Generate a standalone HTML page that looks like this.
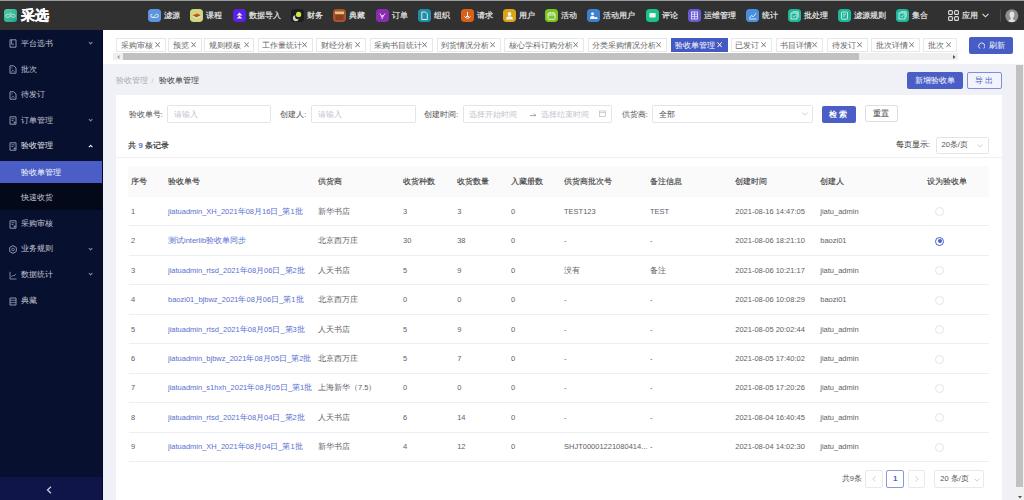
<!DOCTYPE html><html><head><meta charset="utf-8"><style>
*{box-sizing:border-box;margin:0;padding:0}
html,body{width:1024px;height:500px;overflow:hidden;background:#eff1f6;font-family:"Liberation Sans",sans-serif;position:relative}
.a{position:absolute}
.hi{position:absolute;top:9px;width:13px;height:13px;border-radius:3px;overflow:hidden}
.ht{position:absolute;top:10.8px;font-size:7.6px;line-height:10px;color:#dadada;font-weight:bold;white-space:nowrap}
.si{position:absolute;left:0;width:103px;color:#c3c7d3;font-size:7.5px}
.si .t{position:absolute;left:21px;line-height:10px;white-space:nowrap}
.chev{position:absolute;width:3.3px;height:3.3px;border-right:.8px solid #868ca0;border-bottom:.8px solid #868ca0;transform:rotate(45deg)}
.tab{position:absolute;top:37.5px;height:14px;border:1px solid #e6e8ef;background:#fff;color:#666;font-size:7.5px;line-height:12px;white-space:nowrap}
.tab span{position:absolute;top:1px}
.tab.on{background:#4459c2;border-color:#4459c2;color:#fff}
.btn{position:absolute;border-radius:2px;font-size:7.5px;text-align:center;white-space:nowrap}
.lbl{position:absolute;font-size:7.5px;color:#505256;line-height:10px;white-space:nowrap}
.inp{position:absolute;border:1px solid #e3e4e8;border-radius:1.5px;background:#fff;height:17.5px;top:105px}
.ph{position:absolute;font-size:7.5px;color:#c0c4cc;line-height:10px;white-space:nowrap}
.th{position:absolute;font-size:7.5px;color:#383838;-webkit-text-stroke:.12px #383838;line-height:10px;white-space:nowrap;top:176.5px}
.td{position:absolute;font-size:7.5px;color:#606266;line-height:10px;white-space:nowrap}
.lk{color:#5a6fd0}
.hl{position:absolute;left:128.5px;width:860.5px;height:1px;background:#eeeff2}
.radio{position:absolute;width:9px;height:9px;border:1px solid #e2e4ea;border-radius:50%;background:#fff}
</style></head><body>
<div class="a" style="left:0;top:0;width:1024px;height:1px;background:#9a9a9a"></div>
<div class="a" style="left:0;top:1px;width:1024px;height:29px;background:#313131"></div>
<svg class="a" style="left:4px;top:8.8px" width="13" height="13" viewBox="0 0 13 13"><defs><linearGradient id="lg" x1="0" y1="0" x2="1" y2="1"><stop offset="0" stop-color="#4fcaa9"/><stop offset="1" stop-color="#22a687"/></linearGradient></defs><rect width="13" height="13" rx="3" fill="url(#lg)"/><path d="M2 6.8 C2 4.8 4.5 4.6 6.5 6.8 C8.5 9 11 8.8 11 6.8 C11 4.8 8.5 4.6 6.5 6.8 C4.5 9 2 8.8 2 6.8Z" fill="none" stroke="#d2f0e6" stroke-width=".9"/><circle cx="6.5" cy="4.4" r=".8" fill="#bfe9db"/></svg>
<div class="a" style="left:20.8px;top:7.8px;font-size:13.7px;font-weight:bold;color:#fff;line-height:15px;-webkit-text-stroke:.35px #fff">采选</div>
<svg class="hi" style="left:148px" width="13" height="13" viewBox="0 0 13 13"><rect width="13" height="13" rx="3" fill="#5b95df"/><path d="M4.3 5.2a1.6 1.6 0 1 0 0 3.2h4.4a1.6 1.6 0 1 0 0-3.2c-.8 0-1.3.6-2.2 1.6S5.1 8.4 4.3 8.4" fill="none" stroke="#f2f2f2" stroke-width=".9"/></svg>
<div class="ht" style="left:164px">滤源</div>
<svg class="hi" style="left:190px" width="13" height="13" viewBox="0 0 13 13"><rect width="13" height="13" rx="3" fill="#cfd77c"/><path d="M2.5 6.5 L7 4.5 L11 6.3 L6.5 8.6Z" fill="#c8501a"/><path d="M2.5 6.5 L2.5 7.8 L6.5 9.8 L11 7.5 L11 6.3 L6.5 8.6Z" fill="#e9e2d6"/></svg>
<div class="ht" style="left:206px">课程</div>
<svg class="hi" style="left:232.5px" width="13" height="13" viewBox="0 0 13 13"><rect width="13" height="13" rx="3" fill="#5a1fe4"/><path d="M3.5 6.5 L6.5 3.5 L9.5 6.5Z M3.5 9.5 L6.5 6.8 L9.5 9.5Z" fill="#f2f2f2"/></svg>
<div class="ht" style="left:248.5px">数据导入</div>
<svg class="hi" style="left:291px" width="13" height="13" viewBox="0 0 13 13"><rect width="13" height="13" rx="3" fill="#1c1d21"/><circle cx="7.6" cy="5.4" r="2.6" fill="#d6e23a"/><path d="M4.5 6.3a3 3 0 1 0 3.3 3.4 2.4 2.4 0 0 1-3.3-3.4Z" fill="#cfcfcf"/></svg>
<div class="ht" style="left:307px">财务</div>
<svg class="hi" style="left:333px" width="13" height="13" viewBox="0 0 13 13"><rect width="13" height="13" rx="3" fill="#a6532f"/><rect x="2" y="2.5" width="9" height="2.6" fill="#e8c27a"/><rect x="2.5" y="6" width="8" height="5" fill="#8a3f22"/></svg>
<div class="ht" style="left:349px">典藏</div>
<svg class="hi" style="left:375.5px" width="13" height="13" viewBox="0 0 13 13"><rect width="13" height="13" rx="3" fill="#8a2bb0"/><path d="M4 4.5 L6.2 8.5 L6.2 10 M9 4.5 L6.2 8.5 M5.2 6.8 H8" fill="none" stroke="#f2f2f2" stroke-width=".9"/></svg>
<div class="ht" style="left:391.5px">订单</div>
<svg class="hi" style="left:418.3px" width="13" height="13" viewBox="0 0 13 13"><rect width="13" height="13" rx="3" fill="#1f8fa8"/><path d="M3.8 3 H7.5 L9.3 4.8 V10.5 H3.8Z" fill="none" stroke="#f2f2f2" stroke-width=".9"/></svg>
<div class="ht" style="left:434.3px">组织</div>
<svg class="hi" style="left:460.5px" width="13" height="13" viewBox="0 0 13 13"><rect width="13" height="13" rx="3" fill="#d8601a"/><path d="M3.5 7.5 Q6.5 11 9.5 7.5 M6.5 3 V7.2 M5 7.5 H8" fill="none" stroke="#f2f2f2" stroke-width="1"/></svg>
<div class="ht" style="left:476.5px">请求</div>
<svg class="hi" style="left:502.7px" width="13" height="13" viewBox="0 0 13 13"><rect width="13" height="13" rx="3" fill="#d9a514"/><circle cx="6.5" cy="5" r="1.9" fill="#f2f2f2"/><path d="M3 10.5 Q3 7.3 6.5 7.3 Q10 7.3 10 10.5Z" fill="#f2f2f2"/></svg>
<div class="ht" style="left:518.7px">用户</div>
<svg class="hi" style="left:544.7px" width="13" height="13" viewBox="0 0 13 13"><rect width="13" height="13" rx="3" fill="#7cc520"/><rect x="3" y="4" width="7" height="6.3" rx=".6" fill="none" stroke="#f2f2f2" stroke-width=".9"/><path d="M3 6 H10 M5 3 V4.8 M8 3 V4.8" stroke="#f2f2f2" stroke-width=".9"/></svg>
<div class="ht" style="left:560.7px">活动</div>
<svg class="hi" style="left:587.2px" width="13" height="13" viewBox="0 0 13 13"><rect width="13" height="13" rx="3" fill="#3d7fd0"/><circle cx="5.5" cy="4.8" r="1.5" fill="#f2f2f2"/><path d="M3 10 Q3 6.8 5.5 6.8 Q8 6.8 8 10Z M7.5 10 Q8 7.8 9.3 7.8 Q10.6 7.8 10.6 10Z" fill="#f2f2f2"/></svg>
<div class="ht" style="left:603.2px">活动用户</div>
<svg class="hi" style="left:646px" width="13" height="13" viewBox="0 0 13 13"><rect width="13" height="13" rx="3" fill="#18c28a"/><rect x="3.3" y="4" width="6.4" height="4.6" rx=".8" fill="#f2f2f2"/></svg>
<div class="ht" style="left:662px">评论</div>
<svg class="hi" style="left:687.7px" width="13" height="13" viewBox="0 0 13 13"><rect width="13" height="13" rx="3" fill="#6a5ad8"/><rect x="3.5" y="3" width="6" height="7" fill="none" stroke="#f2f2f2" stroke-width=".8"/><path d="M3.5 5.3 H9.5 M3.5 7.6 H9.5 M6.5 3 V10" stroke="#f2f2f2" stroke-width=".7"/></svg>
<div class="ht" style="left:703.7px">运维管理</div>
<svg class="hi" style="left:745.6px" width="13" height="13" viewBox="0 0 13 13"><rect width="13" height="13" rx="3" fill="#4a8ee0"/><path d="M3 10 H10.5 M3.5 9 L5.5 6.5 L7.3 7.8 L10 4.2" fill="none" stroke="#f2f2f2" stroke-width=".9"/></svg>
<div class="ht" style="left:761.6px">统计</div>
<svg class="hi" style="left:787.8px" width="13" height="13" viewBox="0 0 13 13"><rect width="13" height="13" rx="3" fill="#1db89a"/><rect x="3" y="4" width="6" height="6" fill="none" stroke="#f2f2f2" stroke-width=".8"/><path d="M4.5 2.8 H10.2 V8.5" fill="none" stroke="#f2f2f2" stroke-width=".8"/><path d="M4.6 7 L5.8 8.1 L7.6 6" fill="none" stroke="#f2f2f2" stroke-width=".7"/></svg>
<div class="ht" style="left:803.8px">批处理</div>
<svg class="hi" style="left:838px" width="13" height="13" viewBox="0 0 13 13"><rect width="13" height="13" rx="3" fill="#1db89a"/><rect x="3.5" y="3" width="6" height="7.2" rx=".6" fill="none" stroke="#f2f2f2" stroke-width=".8"/><path d="M5 5.2 H8 M5 7 H7" stroke="#f2f2f2" stroke-width=".7"/></svg>
<div class="ht" style="left:854px">滤源规则</div>
<svg class="hi" style="left:896px" width="13" height="13" viewBox="0 0 13 13"><rect width="13" height="13" rx="3" fill="#1db89a"/><rect x="3" y="4" width="6" height="6" fill="none" stroke="#f2f2f2" stroke-width=".8"/><path d="M4.5 2.8 H10.2 V8.5" fill="none" stroke="#f2f2f2" stroke-width=".8"/><path d="M4.6 7 L5.8 8.1 L7.6 6" fill="none" stroke="#f2f2f2" stroke-width=".7"/></svg>
<div class="ht" style="left:912px">集合</div>
<svg class="a" style="left:947.5px;top:10px" width="11" height="11" viewBox="0 0 11 11"><g fill="none" stroke="#ddd" stroke-width="1.1"><rect x="0.6" y="0.6" width="3.8" height="3.8" rx="1"/><rect x="6.6" y="0.6" width="3.8" height="3.8" rx="1"/><rect x="0.6" y="6.6" width="3.8" height="3.8" rx="1"/><rect x="6.6" y="6.6" width="3.8" height="3.8" rx="1"/></g></svg>
<div class="ht" style="left:962px">应用</div>
<svg class="a" style="left:981.5px;top:13px" width="7" height="5" viewBox="0 0 7 5"><path d="M0.5 0.8 L3.5 3.8 L6.5 0.8" fill="none" stroke="#ddd" stroke-width="1.1"/></svg>
<div class="a" style="left:1000px;top:9px;width:1px;height:13px;background:#4a4a4a"></div>
<svg class="a" style="left:1005.4px;top:9px" width="13.6" height="13.6" viewBox="0 0 13.6 13.6"><circle cx="6.8" cy="6.8" r="6.6" fill="#8e8e8e"/><ellipse cx="6.9" cy="5.6" rx="2.4" ry="3.2" fill="#e2e2e2"/><path d="M5.6 8 L5.8 10.3 Q3.8 10.8 3.2 12.2 Q6.8 13.8 10.4 12.2 Q9.8 10.8 8 10.3 L8.2 8Z" fill="#e2e2e2"/></svg>
<div class="a" style="left:0;top:30px;width:103px;height:470px;background:#081030"></div>
<div class="a" style="left:0;top:160.9px;width:103px;height:21.9px;background:#4a5ec6"></div>
<div class="a" style="left:0;top:182.8px;width:103px;height:27.4px;background:#040919"></div>
<div class="a" style="left:0;top:476.7px;width:103px;height:23.3px;background:#0f1548"></div>
<div class="a" style="left:102px;top:30px;width:1px;height:470px;background:#020822"></div>
<div class="si" style="top:38.5px;color:#c3c7d3"><span class="t" style="top:0">平台选书</span></div>
<svg class="a" style="left:8.5px;top:39.3px" width="8" height="9" viewBox="0 0 8 9"><path d="M1 .8 H7 V8.2 H1Z" fill="none" stroke="#8f95aa" stroke-width="1"/><path d="M2.6 1 V5.2 H5" fill="none" stroke="#8f95aa" stroke-width=".9"/></svg>
<div class="chev" style="left:88.8px;top:40.7px"></div>
<div class="si" style="top:64.6px;color:#c3c7d3"><span class="t" style="top:0">批次</span></div>
<svg class="a" style="left:8.5px;top:65.39999999999999px" width="8" height="9" viewBox="0 0 8 9"><path d="M1 .8 H4.8 L7 3 V8.2 H1Z" fill="none" stroke="#8f95aa" stroke-width="1"/><path d="M2.5 6.8 L4 5.2 L5.5 6.8" fill="none" stroke="#8f95aa" stroke-width=".8"/><circle cx="3" cy="3" r=".6" fill="#8f95aa"/></svg>
<div class="si" style="top:90px;color:#c3c7d3"><span class="t" style="top:0">待发订</span></div>
<svg class="a" style="left:8.5px;top:90.8px" width="8" height="9" viewBox="0 0 8 9"><path d="M1 .8 H4.8 L7 3 V8.2 H1Z" fill="none" stroke="#8f95aa" stroke-width="1"/><path d="M2.5 6.8 L4 5.2 L5.5 6.8" fill="none" stroke="#8f95aa" stroke-width=".8"/><circle cx="3" cy="3" r=".6" fill="#8f95aa"/></svg>
<div class="si" style="top:115.6px;color:#c3c7d3"><span class="t" style="top:0">订单管理</span></div>
<svg class="a" style="left:8.5px;top:116.39999999999999px" width="8" height="9" viewBox="0 0 8 9"><path d="M1 .8 H7 V8.2 H1Z" fill="none" stroke="#8f95aa" stroke-width="1"/><path d="M2.5 2.8 H5.5 M2.5 4.5 H4.5" stroke="#8f95aa" stroke-width=".8"/><circle cx="5.6" cy="6.6" r="1" fill="#8f95aa"/></svg>
<div class="chev" style="left:88.8px;top:117.8px"></div>
<div class="si" style="top:141.25px;color:#e8eaf0"><span class="t" style="top:0">验收管理</span></div>
<svg class="a" style="left:8.5px;top:142.05px" width="8" height="9" viewBox="0 0 8 9"><path d="M1 .8 H7 V8.2 H1Z" fill="none" stroke="#8f95aa" stroke-width="1"/><path d="M2.5 2.8 H5.5 M2.5 4.5 H4.5" stroke="#8f95aa" stroke-width=".8"/><circle cx="5.6" cy="6.6" r="1" fill="#8f95aa"/></svg>
<div class="chev" style="left:88.8px;top:145.25px;transform:rotate(225deg);border-color:#fff"></div>
<div class="si" style="top:167.5px;color:#fff"><span class="t" style="top:0">验收单管理</span></div>
<div class="si" style="top:192.7px;color:#c3c7d3"><span class="t" style="top:0">快速收货</span></div>
<div class="si" style="top:218.75px;color:#c3c7d3"><span class="t" style="top:0">采购审核</span></div>
<svg class="a" style="left:8.5px;top:219.55px" width="8" height="9" viewBox="0 0 8 9"><path d="M1 .8 H7 V8.2 H1Z" fill="none" stroke="#8f95aa" stroke-width="1"/><path d="M2.5 2.8 H5.5 M2.5 4.5 H4.5" stroke="#8f95aa" stroke-width=".8"/><circle cx="5.6" cy="6.6" r="1" fill="#8f95aa"/></svg>
<div class="si" style="top:244.4px;color:#c3c7d3"><span class="t" style="top:0">业务规则</span></div>
<svg class="a" style="left:8.5px;top:245.20000000000002px" width="8" height="9" viewBox="0 0 8 9"><path d="M4 .6 L7.3 2.5 V6.5 L4 8.4 L.7 6.5 V2.5Z" fill="none" stroke="#8f95aa" stroke-width="1"/><circle cx="4" cy="4.5" r="1.3" fill="none" stroke="#8f95aa" stroke-width=".8"/></svg>
<div class="chev" style="left:88.8px;top:246.6px"></div>
<div class="si" style="top:270.2px;color:#c3c7d3"><span class="t" style="top:0">数据统计</span></div>
<svg class="a" style="left:8.5px;top:271.0px" width="8" height="9" viewBox="0 0 8 9"><path d="M1 .8 V8 H7.5" fill="none" stroke="#8f95aa" stroke-width=".9"/><path d="M2.3 6 L4 4.2 L5 5 L7 3" fill="none" stroke="#8f95aa" stroke-width=".8"/></svg>
<div class="chev" style="left:88.8px;top:272.4px"></div>
<div class="si" style="top:295.8px;color:#c3c7d3"><span class="t" style="top:0">典藏</span></div>
<svg class="a" style="left:8.5px;top:296.6px" width="8" height="9" viewBox="0 0 8 9"><path d="M1 1 H7 V8 H1Z" fill="none" stroke="#8f95aa" stroke-width="1"/><path d="M1 3.3 H7 M1 5.6 H7" stroke="#8f95aa" stroke-width=".8"/></svg>
<svg class="a" style="left:46px;top:486px" width="6" height="8" viewBox="0 0 6 8"><path d="M5 0.8 L1.5 4 L5 7.2" fill="none" stroke="#c8cbd8" stroke-width="1.3"/></svg>
<div class="a" style="left:103px;top:30px;width:921px;height:34px;background:#fff"></div>
<div class="tab" style="left:116.25px;width:49.25px"><span style="left:3.7px">采购审核</span><svg style="position:absolute;right:4.8px;top:3.8px" width="5.2" height="5.5" viewBox="0 0 5.2 5.5"><path d="M.4 .3 L4.8 5.2 M4.8 .3 L.4 5.2" stroke="#7a7a7a" stroke-width="1"/></svg></div>
<div class="tab" style="left:168.3px;width:33.39999999999998px"><span style="left:3.7px">预览</span><svg style="position:absolute;right:4.8px;top:3.8px" width="5.2" height="5.5" viewBox="0 0 5.2 5.5"><path d="M.4 .3 L4.8 5.2 M4.8 .3 L.4 5.2" stroke="#7a7a7a" stroke-width="1"/></svg></div>
<div class="tab" style="left:204.2px;width:50.30000000000001px"><span style="left:3.7px">规则模板</span><svg style="position:absolute;right:4.8px;top:3.8px" width="5.2" height="5.5" viewBox="0 0 5.2 5.5"><path d="M.4 .3 L4.8 5.2 M4.8 .3 L.4 5.2" stroke="#7a7a7a" stroke-width="1"/></svg></div>
<div class="tab" style="left:257.5px;width:55.80000000000001px"><span style="left:3.7px">工作量统计</span><svg style="position:absolute;right:4.8px;top:3.8px" width="5.2" height="5.5" viewBox="0 0 5.2 5.5"><path d="M.4 .3 L4.8 5.2 M4.8 .3 L.4 5.2" stroke="#7a7a7a" stroke-width="1"/></svg></div>
<div class="tab" style="left:316.4px;width:49.60000000000002px"><span style="left:3.7px">财经分析</span><svg style="position:absolute;right:4.8px;top:3.8px" width="5.2" height="5.5" viewBox="0 0 5.2 5.5"><path d="M.4 .3 L4.8 5.2 M4.8 .3 L.4 5.2" stroke="#7a7a7a" stroke-width="1"/></svg></div>
<div class="tab" style="left:369.5px;width:63.80000000000001px"><span style="left:3.7px">采购书目统计</span><svg style="position:absolute;right:4.8px;top:3.8px" width="5.2" height="5.5" viewBox="0 0 5.2 5.5"><path d="M.4 .3 L4.8 5.2 M4.8 .3 L.4 5.2" stroke="#7a7a7a" stroke-width="1"/></svg></div>
<div class="tab" style="left:436.7px;width:64.55000000000001px"><span style="left:3.7px">到货情况分析</span><svg style="position:absolute;right:4.8px;top:3.8px" width="5.2" height="5.5" viewBox="0 0 5.2 5.5"><path d="M.4 .3 L4.8 5.2 M4.8 .3 L.4 5.2" stroke="#7a7a7a" stroke-width="1"/></svg></div>
<div class="tab" style="left:504.4px;width:79.60000000000002px"><span style="left:3.7px">核心学科订购分析</span><svg style="position:absolute;right:4.8px;top:3.8px" width="5.2" height="5.5" viewBox="0 0 5.2 5.5"><path d="M.4 .3 L4.8 5.2 M4.8 .3 L.4 5.2" stroke="#7a7a7a" stroke-width="1"/></svg></div>
<div class="tab" style="left:587.5px;width:79.70000000000005px"><span style="left:3.7px">分类采购情况分析</span><svg style="position:absolute;right:4.8px;top:3.8px" width="5.2" height="5.5" viewBox="0 0 5.2 5.5"><path d="M.4 .3 L4.8 5.2 M4.8 .3 L.4 5.2" stroke="#7a7a7a" stroke-width="1"/></svg></div>
<div class="tab on" style="left:670.8px;width:57.0px"><span style="left:3.7px">验收单管理</span><svg style="position:absolute;right:4.8px;top:3.8px" width="5.2" height="5.5" viewBox="0 0 5.2 5.5"><path d="M.4 .3 L4.8 5.2 M4.8 .3 L.4 5.2" stroke="#fff" stroke-width="1"/></svg></div>
<div class="tab" style="left:730.5px;width:41.700000000000045px"><span style="left:3.7px">已发订</span><svg style="position:absolute;right:4.8px;top:3.8px" width="5.2" height="5.5" viewBox="0 0 5.2 5.5"><path d="M.4 .3 L4.8 5.2 M4.8 .3 L.4 5.2" stroke="#7a7a7a" stroke-width="1"/></svg></div>
<div class="tab" style="left:775.5px;width:47.89999999999998px"><span style="left:3.7px">书目详情</span><svg style="position:absolute;right:4.8px;top:3.8px" width="5.2" height="5.5" viewBox="0 0 5.2 5.5"><path d="M.4 .3 L4.8 5.2 M4.8 .3 L.4 5.2" stroke="#7a7a7a" stroke-width="1"/></svg></div>
<div class="tab" style="left:826.9px;width:41.5px"><span style="left:3.7px">待发订</span><svg style="position:absolute;right:4.8px;top:3.8px" width="5.2" height="5.5" viewBox="0 0 5.2 5.5"><path d="M.4 .3 L4.8 5.2 M4.8 .3 L.4 5.2" stroke="#7a7a7a" stroke-width="1"/></svg></div>
<div class="tab" style="left:871.4px;width:48.89999999999998px"><span style="left:3.7px">批次详情</span><svg style="position:absolute;right:4.8px;top:3.8px" width="5.2" height="5.5" viewBox="0 0 5.2 5.5"><path d="M.4 .3 L4.8 5.2 M4.8 .3 L.4 5.2" stroke="#7a7a7a" stroke-width="1"/></svg></div>
<div class="tab" style="left:923.4px;width:33.30000000000007px"><span style="left:3.7px">批次</span><svg style="position:absolute;right:4.8px;top:3.8px" width="5.2" height="5.5" viewBox="0 0 5.2 5.5"><path d="M.4 .3 L4.8 5.2 M4.8 .3 L.4 5.2" stroke="#7a7a7a" stroke-width="1"/></svg></div>
<div class="a" style="left:113px;top:53px;width:844.5px;height:7.2px;background:#efefef"></div>
<div class="a" style="left:122.5px;top:53px;width:736px;height:7.2px;background:#c1c1c1"></div>
<svg class="a" style="left:116.5px;top:54.8px" width="3" height="4" viewBox="0 0 3 4"><path d="M2.5 0 L0 2 L2.5 4Z" fill="#a3a3a3"/></svg>
<svg class="a" style="left:952.5px;top:54.8px" width="3" height="4" viewBox="0 0 3 4"><path d="M0 0 L2.5 2 L0 4Z" fill="#505050"/></svg>
<div class="btn" style="left:969px;top:37px;width:44.2px;height:17px;background:#475dc6;color:#fff;line-height:17px"><span style="position:absolute;left:19.8px;top:0;font-size:7.6px">刷新</span></div>
<svg class="a" style="left:977.5px;top:41.8px" width="7.5" height="7.5" viewBox="0 0 7.5 7.5"><path d="M2 6.6 A3.1 3.1 0 1 1 5.8 6.4" fill="none" stroke="#e8ebf8" stroke-width="1"/></svg>
<div class="a" style="left:116px;top:75.8px;font-size:7.5px;line-height:10px;color:#a8abb2;white-space:nowrap">验收管理</div>
<div class="a" style="left:151.5px;top:75.8px;font-size:7.5px;line-height:10px;color:#c0c4cc">/</div>
<div class="a" style="left:158.5px;top:75.8px;font-size:7.5px;line-height:10px;color:#303133;font-weight:500;white-space:nowrap">验收单管理</div>
<div class="btn" style="left:906.7px;top:72px;width:56px;height:17px;background:#4a5ec6;color:#fff;line-height:17px">新增验收单</div>
<div class="btn" style="left:967px;top:72px;width:35px;height:17px;border:1px solid #7d8de0;color:#4a5ec6;line-height:15px;background:#f3f4fb;letter-spacing:2px">导出</div>
<div class="a" style="left:116px;top:95px;width:886px;height:405px;background:#fff"></div>
<div class="lbl" style="left:128.7px;top:110px">验收单号:</div>
<div class="inp" style="left:167px;width:104.3px"></div>
<div class="ph" style="left:174px;top:110px">请输入</div>
<div class="lbl" style="left:280.3px;top:110px">创建人:</div>
<div class="inp" style="left:311.25px;width:104.3px"></div>
<div class="ph" style="left:317.8px;top:110px">请输入</div>
<div class="lbl" style="left:424px;top:110px">创建时间:</div>
<div class="inp" style="left:463px;width:149.3px"></div>
<div class="ph" style="left:469px;top:110px">选择开始时间</div>
<svg class="a" style="left:529.8px;top:112.5px" width="6.5" height="4" viewBox="0 0 6.5 4"><path d="M0 2.6 H6 M3.8 .8 L6 2.6" fill="none" stroke="#8a8d94" stroke-width=".8"/></svg>
<div class="ph" style="left:541px;top:110px">选择结束时间</div>
<svg class="a" style="left:599px;top:110px" width="7" height="7" viewBox="0 0 7 7"><rect x="0.5" y="1" width="6" height="5.5" fill="none" stroke="#c0c4cc" stroke-width="0.8"/><path d="M0.5 2.6H6.5" stroke="#c0c4cc" stroke-width="0.8"/></svg>
<div class="lbl" style="left:621.7px;top:110px">供货商:</div>
<div class="inp" style="left:652.2px;width:160.6px"></div>
<div class="lbl" style="left:659.2px;top:110px">全部</div>
<svg class="a" style="left:801.5px;top:112px" width="6" height="4" viewBox="0 0 6 4"><path d="M0.4 0.5 L3 3.2 L5.6 0.5" fill="none" stroke="#c0c4cc" stroke-width="0.8"/></svg>
<div class="btn" style="left:821.6px;top:105.6px;width:34.7px;height:17.2px;background:#4a5ec6;color:#fff;line-height:17px;font-weight:bold;letter-spacing:2px">检索</div>
<div class="btn" style="left:864.8px;top:105.4px;width:33.2px;height:16.8px;border:1px solid #dcdfe6;color:#303133;line-height:16.5px;background:#fff">重置</div>
<div class="lbl" style="left:128.4px;top:141px;color:#303133;-webkit-text-stroke:.2px #303133">共 <span style="color:#4a5ec6;-webkit-text-stroke:.2px #4a5ec6">9</span> 条记录</div>
<div class="lbl" style="left:896px;top:140.4px;color:#303133">每页显示:</div>
<div class="inp" style="left:935.5px;top:136.8px;width:53.5px;height:16.8px"></div>
<div class="lbl" style="left:941.5px;top:140.4px">20条/页</div>
<svg class="a" style="left:977px;top:143.5px" width="6" height="4" viewBox="0 0 6 4"><path d="M0.4 0.5 L3 3.2 L5.6 0.5" fill="none" stroke="#c0c4cc" stroke-width="0.8"/></svg>
<div class="a" style="left:116px;top:157px;width:886px;height:1px;background:#f0f0f3"></div>
<div class="a" style="left:128.4px;top:166px;width:860.6px;height:30.8px;background:#fafafa"></div>
<div class="th" style="left:131px">序号</div>
<div class="th" style="left:168px">验收单号</div>
<div class="th" style="left:318px">供货商</div>
<div class="th" style="left:403px">收货种数</div>
<div class="th" style="left:457.2px">收货数量</div>
<div class="th" style="left:511px">入藏册数</div>
<div class="th" style="left:564px">供货商批次号</div>
<div class="th" style="left:650px">备注信息</div>
<div class="th" style="left:735.25px">创建时间</div>
<div class="th" style="left:820.25px">创建人</div>
<div class="th" style="left:926.8px">设为验收单</div>
<div class="td" style="left:131px;top:206.6px">1</div>
<div class="td lk" style="left:168px;top:206.6px">jiatuadmin_XH_2021年08月16日_第1批</div>
<div class="td" style="left:318px;top:206.6px">新华书店</div>
<div class="td" style="left:403px;top:206.6px">3</div>
<div class="td" style="left:457.2px;top:206.6px">3</div>
<div class="td" style="left:511px;top:206.6px">0</div>
<div class="td" style="left:564px;top:206.6px">TEST123</div>
<div class="td" style="left:650px;top:206.6px">TEST</div>
<div class="td" style="left:735.25px;top:206.6px">2021-08-16 14:47:05</div>
<div class="td" style="left:820.25px;top:206.6px">jiatu_admin</div>
<div class="radio" style="left:935px;top:207.1px"></div>
<div class="hl" style="top:225.2px"></div>
<div class="td" style="left:131px;top:236.07999999999998px">2</div>
<div class="td lk" style="left:168px;top:236.07999999999998px">测试interlib验收单同步</div>
<div class="td" style="left:318px;top:236.07999999999998px">北京西万庄</div>
<div class="td" style="left:403px;top:236.07999999999998px">30</div>
<div class="td" style="left:457.2px;top:236.07999999999998px">38</div>
<div class="td" style="left:511px;top:236.07999999999998px">0</div>
<div class="td" style="left:564px;top:236.07999999999998px">-</div>
<div class="td" style="left:650px;top:236.07999999999998px">-</div>
<div class="td" style="left:735.25px;top:236.07999999999998px">2021-08-06 18:21:10</div>
<div class="td" style="left:820.25px;top:236.07999999999998px">baozi01</div>
<div class="radio" style="left:935px;top:236.57999999999998px;border-color:#4a5ec6"></div>
<div class="a" style="left:937.5px;top:239.07999999999998px;width:4px;height:4px;border-radius:50%;background:#4a5ec6"></div>
<div class="hl" style="top:254.67999999999998px"></div>
<div class="td" style="left:131px;top:265.56px">3</div>
<div class="td lk" style="left:168px;top:265.56px">jiatuadmin_rtsd_2021年08月06日_第2批</div>
<div class="td" style="left:318px;top:265.56px">人天书店</div>
<div class="td" style="left:403px;top:265.56px">5</div>
<div class="td" style="left:457.2px;top:265.56px">9</div>
<div class="td" style="left:511px;top:265.56px">0</div>
<div class="td" style="left:564px;top:265.56px">没有</div>
<div class="td" style="left:650px;top:265.56px">备注</div>
<div class="td" style="left:735.25px;top:265.56px">2021-08-06 10:21:17</div>
<div class="td" style="left:820.25px;top:265.56px">jiatu_admin</div>
<div class="radio" style="left:935px;top:266.06px"></div>
<div class="hl" style="top:284.15999999999997px"></div>
<div class="td" style="left:131px;top:295.03999999999996px">4</div>
<div class="td lk" style="left:168px;top:295.03999999999996px">baozi01_bjbwz_2021年08月06日_第1批</div>
<div class="td" style="left:318px;top:295.03999999999996px">北京西万庄</div>
<div class="td" style="left:403px;top:295.03999999999996px">0</div>
<div class="td" style="left:457.2px;top:295.03999999999996px">0</div>
<div class="td" style="left:511px;top:295.03999999999996px">0</div>
<div class="td" style="left:564px;top:295.03999999999996px">-</div>
<div class="td" style="left:650px;top:295.03999999999996px">-</div>
<div class="td" style="left:735.25px;top:295.03999999999996px">2021-08-06 10:08:29</div>
<div class="td" style="left:820.25px;top:295.03999999999996px">baozi01</div>
<div class="radio" style="left:935px;top:295.53999999999996px"></div>
<div class="hl" style="top:313.64px"></div>
<div class="td" style="left:131px;top:324.52px">5</div>
<div class="td lk" style="left:168px;top:324.52px">jiatuadmin_rtsd_2021年08月05日_第3批</div>
<div class="td" style="left:318px;top:324.52px">人天书店</div>
<div class="td" style="left:403px;top:324.52px">5</div>
<div class="td" style="left:457.2px;top:324.52px">9</div>
<div class="td" style="left:511px;top:324.52px">0</div>
<div class="td" style="left:564px;top:324.52px">-</div>
<div class="td" style="left:650px;top:324.52px">-</div>
<div class="td" style="left:735.25px;top:324.52px">2021-08-05 20:02:44</div>
<div class="td" style="left:820.25px;top:324.52px">jiatu_admin</div>
<div class="radio" style="left:935px;top:325.02px"></div>
<div class="hl" style="top:343.12px"></div>
<div class="td" style="left:131px;top:354.0px">6</div>
<div class="td lk" style="left:168px;top:354.0px">jiatuadmin_bjbwz_2021年08月05日_第2批</div>
<div class="td" style="left:318px;top:354.0px">北京西万庄</div>
<div class="td" style="left:403px;top:354.0px">5</div>
<div class="td" style="left:457.2px;top:354.0px">7</div>
<div class="td" style="left:511px;top:354.0px">0</div>
<div class="td" style="left:564px;top:354.0px">-</div>
<div class="td" style="left:650px;top:354.0px">-</div>
<div class="td" style="left:735.25px;top:354.0px">2021-08-05 17:40:02</div>
<div class="td" style="left:820.25px;top:354.0px">jiatu_admin</div>
<div class="radio" style="left:935px;top:354.5px"></div>
<div class="hl" style="top:372.6px"></div>
<div class="td" style="left:131px;top:383.48px">7</div>
<div class="td lk" style="left:168px;top:383.48px">jiatuadmin_s1hxh_2021年08月05日_第1批</div>
<div class="td" style="left:318px;top:383.48px">上海新华（7.5）</div>
<div class="td" style="left:403px;top:383.48px">0</div>
<div class="td" style="left:457.2px;top:383.48px">0</div>
<div class="td" style="left:511px;top:383.48px">0</div>
<div class="td" style="left:564px;top:383.48px">-</div>
<div class="td" style="left:650px;top:383.48px">-</div>
<div class="td" style="left:735.25px;top:383.48px">2021-08-05 17:20:26</div>
<div class="td" style="left:820.25px;top:383.48px">jiatu_admin</div>
<div class="radio" style="left:935px;top:383.98px"></div>
<div class="hl" style="top:402.08px"></div>
<div class="td" style="left:131px;top:412.96000000000004px">8</div>
<div class="td lk" style="left:168px;top:412.96000000000004px">jiatuadmin_rtsd_2021年08月04日_第2批</div>
<div class="td" style="left:318px;top:412.96000000000004px">人天书店</div>
<div class="td" style="left:403px;top:412.96000000000004px">6</div>
<div class="td" style="left:457.2px;top:412.96000000000004px">14</div>
<div class="td" style="left:511px;top:412.96000000000004px">0</div>
<div class="td" style="left:564px;top:412.96000000000004px">-</div>
<div class="td" style="left:650px;top:412.96000000000004px">-</div>
<div class="td" style="left:735.25px;top:412.96000000000004px">2021-08-04 16:40:45</div>
<div class="td" style="left:820.25px;top:412.96000000000004px">jiatu_admin</div>
<div class="radio" style="left:935px;top:413.46000000000004px"></div>
<div class="hl" style="top:431.56px"></div>
<div class="td" style="left:131px;top:442.44px">9</div>
<div class="td lk" style="left:168px;top:442.44px">jiatuadmin_XH_2021年08月04日_第1批</div>
<div class="td" style="left:318px;top:442.44px">新华书店</div>
<div class="td" style="left:403px;top:442.44px">4</div>
<div class="td" style="left:457.2px;top:442.44px">12</div>
<div class="td" style="left:511px;top:442.44px">0</div>
<div class="td" style="left:564px;top:442.44px">SHJT00001221080414...</div>
<div class="td" style="left:650px;top:442.44px">-</div>
<div class="td" style="left:735.25px;top:442.44px">2021-08-04 14:02:30</div>
<div class="td" style="left:820.25px;top:442.44px">jiatu_admin</div>
<div class="radio" style="left:935px;top:442.94px"></div>
<div class="hl" style="top:461.03999999999996px"></div>
<div class="lbl" style="left:841.7px;top:474px">共9条</div>
<div class="a" style="left:865.3px;top:470.3px;width:17.4px;height:17.4px;border:1px solid #e8e9ec;border-radius:2px"></div>
<svg class="a" style="left:872px;top:476px" width="4" height="6" viewBox="0 0 4 6"><path d="M3.5 0.3 L0.8 3 L3.5 5.7" fill="none" stroke="#c0c4cc" stroke-width="0.8"/></svg>
<div class="a" style="left:886.4px;top:470.3px;width:17.5px;height:17.4px;border:1px solid #8a98e0;border-radius:2px;color:#4a5ec6;font-size:8px;font-weight:bold;line-height:15.4px;text-align:center">1</div>
<div class="a" style="left:908.2px;top:470.3px;width:17.3px;height:17.4px;border:1px solid #e8e9ec;border-radius:2px"></div>
<svg class="a" style="left:915px;top:476px" width="4" height="6" viewBox="0 0 4 6"><path d="M0.5 0.3 L3.2 3 L0.5 5.7" fill="none" stroke="#c0c4cc" stroke-width="0.8"/></svg>
<div class="a" style="left:934.2px;top:470.3px;width:50.3px;height:17.4px;border:1px solid #e8e9ec;border-radius:2px"></div>
<div class="lbl" style="left:940.3px;top:474.4px">20 条/页</div>
<svg class="a" style="left:973.5px;top:477.5px" width="6" height="4" viewBox="0 0 6 4"><path d="M0.4 0.5 L3 3.2 L5.6 0.5" fill="none" stroke="#c0c4cc" stroke-width="0.8"/></svg>
<div class="a" style="left:1015.3px;top:64px;width:8.7px;height:436px;background:#f1f1f1"></div>
<div class="a" style="left:1016px;top:65px;width:7px;height:421.5px;background:#c1c1c1"></div>
<svg class="a" style="left:1017.5px;top:496px" width="4" height="3" viewBox="0 0 4 3"><path d="M0 0 L4 0 L2 2.5Z" fill="#505050"/></svg>
</body></html>
